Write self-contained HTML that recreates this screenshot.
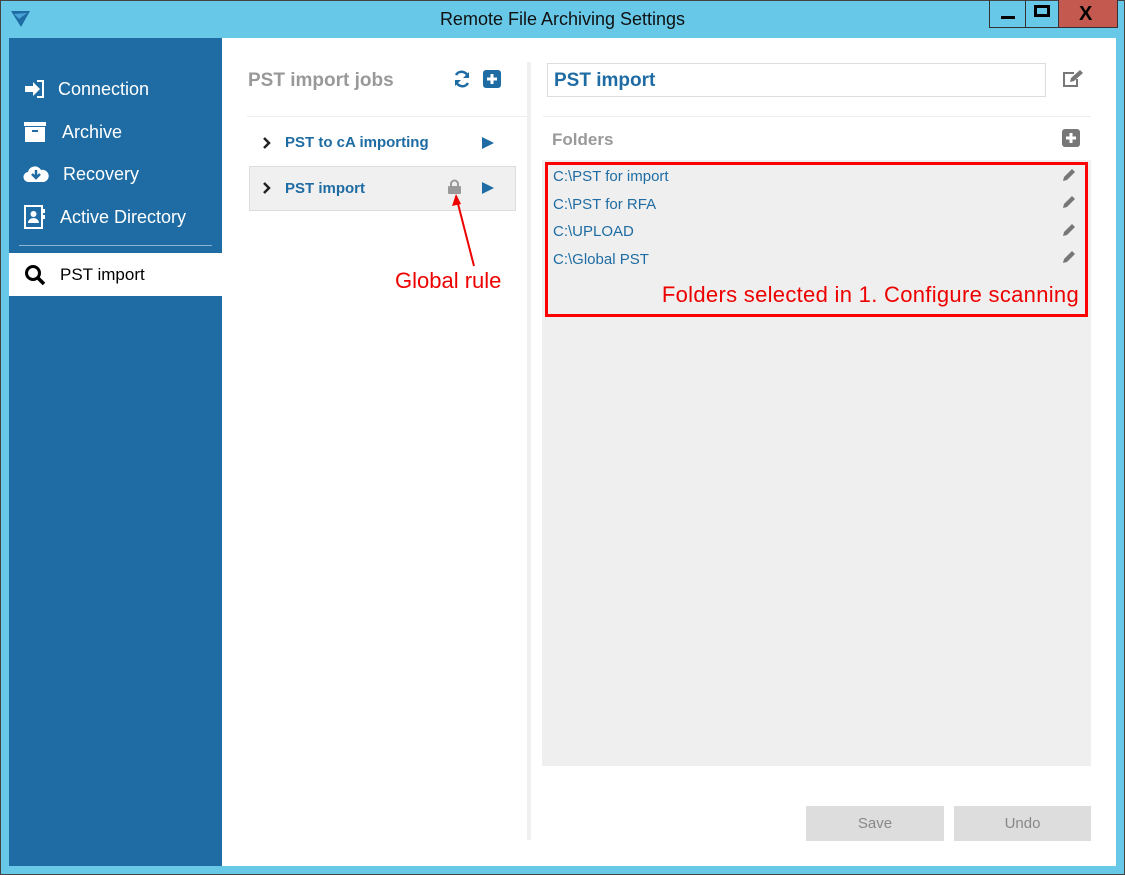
<!DOCTYPE html>
<html><head><meta charset="utf-8"><style>
*{margin:0;padding:0;box-sizing:border-box}
body{width:1125px;height:875px;background:#67c8e8;position:relative;overflow:hidden;font-family:"Liberation Sans",sans-serif}
.abs{position:absolute}
.t{position:absolute;white-space:nowrap}
</style></head><body>
<div class="abs" style="left:0;top:0;width:1125px;height:875px;border:1px solid #444"></div>
<svg class="abs" style="left:10px;top:9px" width="22" height="20" viewBox="0 0 22 20"><path d="M1 2 L20 2 L11 18 Z" fill="#1e6ca3"/><path d="M4 5 L17 4 L9 10Z" fill="#4aa3d6"/></svg>
<div class="t" style="left:0;width:1125px;text-align:center;top:9px;font-size:18px;color:#111">Remote File Archiving Settings</div>
<div class="abs" style="left:989px;top:0;width:37px;height:28px;border:1px solid #333;border-top:none"></div>
<div class="abs" style="left:1001px;top:16px;width:14px;height:3px;background:#000"></div>
<div class="abs" style="left:1025px;top:0;width:34px;height:28px;border:1px solid #333;border-top:none"></div>
<div class="abs" style="left:1034px;top:5px;width:16px;height:12px;border:3px solid #000"></div>
<div class="abs" style="left:1058px;top:0;width:60px;height:28px;background:#c45a4f;border:1px solid #333;border-top:none"></div>
<div class="t" style="left:1079px;top:3px;font-size:20px;font-weight:bold">X</div>

<div class="abs" style="left:9px;top:38px;width:213px;height:828px;background:#1e6ca3"></div>
<div class="abs" style="left:222px;top:38px;width:894px;height:828px;background:#fff"></div>

<svg class="abs" style="left:24px;top:80px" width="22" height="18" viewBox="0 0 22 18"><path d="M1 6h8V2l7 7-7 7v-4H1z" fill="#fff"/><path d="M13 1h6v16h-6" fill="none" stroke="#fff" stroke-width="2"/></svg>
<div class="t" style="left:58px;top:79px;font-size:18px;color:#fff">Connection</div>
<svg class="abs" style="left:24px;top:122px" width="22" height="20" viewBox="0 0 22 20"><rect x="0" y="0" width="22" height="4" fill="#fff"/><rect x="1" y="5" width="20" height="15" fill="#fff"/><rect x="8" y="8" width="6" height="2" fill="#1e6ca3"/></svg>
<div class="t" style="left:62px;top:122px;font-size:18px;color:#fff">Archive</div>
<svg class="abs" style="left:23px;top:163px" width="26" height="20" viewBox="0 0 26 20"><path d="M6 19a5 5 0 0 1-1-10 7 7 0 0 1 13-2 6 6 0 0 1 3 12z" fill="#fff"/><path d="M13 7v7M9 11l4 4 4-4" stroke="#1e6ca3" stroke-width="2.5" fill="none"/></svg>
<div class="t" style="left:63px;top:164px;font-size:18px;color:#fff">Recovery</div>
<svg class="abs" style="left:24px;top:205px" width="22" height="24" viewBox="0 0 22 24"><rect x="1" y="1" width="17" height="22" fill="none" stroke="#fff" stroke-width="2"/><circle cx="9.5" cy="9" r="3" fill="#fff"/><path d="M4 18a5.5 5 0 0 1 11 0z" fill="#fff"/><rect x="19" y="4" width="2" height="4" fill="#fff"/><rect x="19" y="10" width="2" height="4" fill="#fff"/></svg>
<div class="t" style="left:60px;top:207px;font-size:18px;color:#fff">Active Directory</div>
<div class="abs" style="left:19px;top:245px;width:193px;height:1px;background:#8ab4d3"></div>
<div class="abs" style="left:9px;top:253px;width:213px;height:43px;background:#fff"></div>
<svg class="abs" style="left:24px;top:264px" width="22" height="22" viewBox="0 0 22 22"><circle cx="9" cy="9" r="6.5" fill="none" stroke="#000" stroke-width="3"/><path d="M14 14l6 6" stroke="#000" stroke-width="3.5"/></svg>
<div class="t" style="left:60px;top:265px;font-size:17px;color:#000">PST import</div>

<div class="t" style="left:248px;top:70px;font-size:19px;color:#999;font-weight:bold">PST import jobs</div>
<svg class="abs" style="left:453px;top:70px" width="18" height="18" viewBox="0 0 18 18"><path d="M15 7A6.5 6.5 0 0 0 3 5M3 11a6.5 6.5 0 0 0 12 2" fill="none" stroke="#1e6ca3" stroke-width="2.6"/><path d="M16 2v6h-6zM2 16v-6h6z" fill="#1e6ca3"/></svg>
<svg class="abs" style="left:483px;top:70px" width="18" height="18" viewBox="0 0 18 18"><rect width="18" height="18" rx="3" fill="#1e6ca3"/><path d="M9 4v10M4 9h10" stroke="#fff" stroke-width="3"/></svg>
<div class="abs" style="left:247px;top:116px;width:280px;height:1px;background:#eee"></div>
<div class="abs" style="left:527px;top:62px;width:4px;height:778px;background:#f0f0f0"></div>
<svg class="abs" style="left:262px;top:136px" width="10" height="14"><path d="M2 2l5 5-5 5" fill="none" stroke="#222" stroke-width="2.5"/></svg>
<div class="t" style="left:285px;top:134px;color:#1e6ca3;font-weight:bold;font-size:15px">PST to cA importing</div>
<svg class="abs" style="left:481px;top:136px" width="14" height="14"><path d="M1 1l12 6-12 6z" fill="#1e6ca3"/></svg>
<div class="abs" style="left:249px;top:166px;width:267px;height:45px;background:#f0f0f0;border:1px solid #ddd"></div>
<svg class="abs" style="left:262px;top:181px" width="10" height="14"><path d="M2 2l5 5-5 5" fill="none" stroke="#222" stroke-width="2.5"/></svg>
<div class="t" style="left:285px;top:180px;color:#1e6ca3;font-weight:bold;font-size:15px">PST import</div>
<svg class="abs" style="left:448px;top:179px" width="13" height="15" viewBox="0 0 13 15"><path d="M3 7V5a3.5 3.5 0 0 1 7 0v2" fill="none" stroke="#999" stroke-width="2"/><rect x="0" y="7" width="13" height="8" rx="1" fill="#999"/></svg>
<svg class="abs" style="left:481px;top:181px" width="14" height="14"><path d="M1 1l12 6-12 6z" fill="#1e6ca3"/></svg>
<svg class="abs" style="left:440px;top:190px" width="40" height="80"><path d="M16 6l18 70" stroke="#e00" stroke-width="2"/><path d="M16 4l-4 12 9-2z" fill="#e00"/></svg>
<div class="t" style="left:395px;top:268px;font-size:22px;color:#e00">Global rule</div>

<div class="abs" style="left:547px;top:63px;width:499px;height:34px;border:1px solid #ddd"></div>
<div class="t" style="left:554px;top:70px;font-size:19px;font-weight:bold;color:#1e6ca3">PST import</div>
<svg class="abs" style="left:1062px;top:70px" width="21" height="18" viewBox="0 0 21 18"><path d="M12 3H2v13h13V9" fill="none" stroke="#777" stroke-width="2"/><path d="M8 12l1-4 9-8 3 3-9 8z" fill="#777"/></svg>
<div class="abs" style="left:543px;top:116px;width:548px;height:1px;background:#eee"></div>
<div class="t" style="left:552px;top:130px;font-size:17px;color:#999;font-weight:bold">Folders</div>
<svg class="abs" style="left:1062px;top:129px" width="18" height="18"><rect width="18" height="18" rx="3" fill="#777"/><path d="M9 4v10M4 9h10" stroke="#fff" stroke-width="3"/></svg>
<div class="abs" style="left:542px;top:160px;width:549px;height:606px;background:#efefef"></div>
<div class="abs" style="left:545px;top:162px;width:543px;height:155px;border:3px solid #f00"></div>
<div class="t" style="left:553px;top:168px;font-size:15px;color:#1e6ca3">C:\PST for import</div>
<div class="t" style="left:553px;top:196px;font-size:15px;color:#1e6ca3">C:\PST for RFA</div>
<div class="t" style="left:553px;top:223px;font-size:15px;color:#1e6ca3">C:\UPLOAD</div>
<div class="t" style="left:553px;top:251px;font-size:15px;color:#1e6ca3">C:\Global PST</div>
<svg class="abs" style="left:1062px;top:167px" width="15" height="15"><path d="M1 14l1-4 8-8 3 3-8 8z" fill="#777"/></svg>
<svg class="abs" style="left:1062px;top:194px" width="15" height="15"><path d="M1 14l1-4 8-8 3 3-8 8z" fill="#777"/></svg>
<svg class="abs" style="left:1062px;top:222px" width="15" height="15"><path d="M1 14l1-4 8-8 3 3-8 8z" fill="#777"/></svg>
<svg class="abs" style="left:1062px;top:249px" width="15" height="15"><path d="M1 14l1-4 8-8 3 3-8 8z" fill="#777"/></svg>
<div class="t" style="right:46px;top:282px;font-size:22px;color:#e00;letter-spacing:0.3px">Folders selected in 1. Configure scanning</div>
<div class="abs" style="left:806px;top:806px;width:138px;height:35px;background:#ddd;color:#888;font-size:15px;text-align:center;line-height:36px">Save</div>
<div class="abs" style="left:954px;top:806px;width:137px;height:35px;background:#ddd;color:#888;font-size:15px;text-align:center;line-height:36px">Undo</div>
</body></html>
